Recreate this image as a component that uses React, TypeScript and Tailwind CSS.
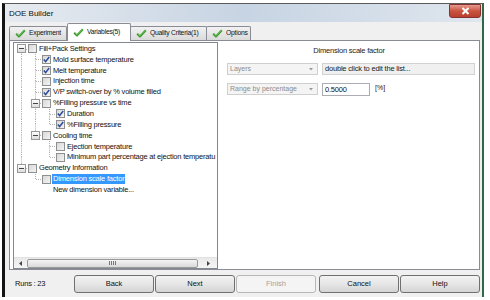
import React from "react";

type TreeNode = {
  label: string;
  level: number;
  kids?: boolean;
  cb: boolean | null; // null = no checkbox
  sel?: boolean;
  bare?: boolean; // placeholder row, no connector
};

const NODES: TreeNode[] = [
  { label: "Fill+Pack Settings", level: 0, kids: true, cb: false },
  { label: "Mold surface temperature", level: 1, cb: true },
  { label: "Melt temperature", level: 1, cb: true },
  { label: "Injection time", level: 1, cb: false },
  { label: "V/P switch-over by % volume filled", level: 1, cb: true },
  { label: "%Filling pressure vs time", level: 1, kids: true, cb: false },
  { label: "Duration", level: 2, cb: true },
  { label: "%Filling pressure", level: 2, cb: true },
  { label: "Cooling time", level: 1, kids: true, cb: false },
  { label: "Ejection temperature", level: 2, cb: false },
  { label: "Minimum part percentage at ejection temperatu", level: 2, cb: false },
  { label: "Geometry Information", level: 0, kids: true, cb: false },
  { label: "Dimension scale factor", level: 1, cb: false, sel: true },
  { label: "New dimension variable...", level: 1, cb: null, bare: true },
];

/// true when a later node sits at the same level under the same parent
function hasNext(i: number): boolean {
  const lv = NODES[i].level;
  for (let j = i + 1; j < NODES.length; j++) {
    if (NODES[j].bare) continue;
    if (NODES[j].level < lv) return false;
    if (NODES[j].level === lv) return true;
  }
  return false;
}

function ancestorAt(i: number, level: number): number {
  for (let j = i - 1; j >= 0; j--) if (NODES[j].level === level) return j;
  return -1;
}

const DOT = "#b0b0b0";

function Cell({
  up,
  down,
  across,
  expander,
}: {
  up?: boolean;
  down?: boolean;
  across?: boolean;
  expander?: boolean;
}) {
  return (
    <div className="grid w-[14px] h-full shrink-0">
      <svg width="14" height="100%" className="col-start-1 row-start-1 h-full">
        {up && <line x1="7.5" y1="0" x2="7.5" y2="50%" stroke={DOT} strokeDasharray="1 1" />}
        {down && <line x1="7.5" y1="50%" x2="7.5" y2="100%" stroke={DOT} strokeDasharray="1 1" />}
        {across && <line x1="8" y1="50%" x2="14" y2="50%" stroke={DOT} strokeDasharray="1 1" />}
      </svg>
      {expander && (
        <div className="col-start-1 row-start-1 self-center justify-self-center w-[9px] h-[9px] border border-[#999] bg-gradient-to-b from-white to-[#dcdcdc] flex items-center justify-center">
          <div className="w-[5px] h-px bg-[#444]" />
        </div>
      )}
    </div>
  );
}

function CheckBox({ on }: { on: boolean }) {
  return (
    <div className="w-[9px] h-[9px] shrink-0 border border-[#8e8f8f] bg-gradient-to-br from-[#d8d8d8] to-[#f4f4f4] flex items-center justify-center">
      {on && (
        <svg width="7" height="7" viewBox="0 0 7 7">
          <path d="M0.8 3.6 L2.6 5.6 L6.2 1" fill="none" stroke="#2c4a9a" strokeWidth="1.5" />
        </svg>
      )}
    </div>
  );
}

function TreeRow({ i }: { i: number }) {
  const n = NODES[i];
  const cells: React.ReactNode[] = [];
  for (let k = 0; k < n.level; k++) {
    const a = ancestorAt(i, k);
    const cont = a >= 0 && hasNext(a);
    cells.push(<Cell key={k} up={cont} down={cont} />);
  }
  if (n.bare) {
    cells.push(<Cell key="own" />);
  } else {
    cells.push(
      <Cell key="own" up={i !== 0} down={hasNext(i)} across expander={n.kids} />,
    );
  }
  return (
    <div className="flex items-center h-[10.85px]">
      {cells}
      {n.cb === null ? <div className="w-[9px] shrink-0" /> : <CheckBox on={n.cb} />}
      <span
        className={`ml-[1px] px-[1px] leading-[10px] whitespace-nowrap ${
          n.sel ? "bg-[#3399ff] text-white" : "text-[#111]"
        }`}
      >
        {n.label}
      </span>
    </div>
  );
}

function TabCheck() {
  return (
    <svg width="11" height="9" viewBox="0 0 12 10" className="shrink-0">
      <path d="M1.2 5.2 L4.3 8.3 L10.8 1.4" fill="none" stroke="#3f9b2f" strokeWidth="2.3" strokeLinejoin="round" />
      <path d="M1.6 4.9 L4.3 7.6 L10.4 1.3" fill="none" stroke="#7fd06a" strokeWidth="0.7" />
    </svg>
  );
}

function Tab({ label, width, active }: { label: string; width: string; active?: boolean }) {
  return (
    <div
      className={`${width} flex items-center gap-[3px] pl-[5px] border border-[#898c95] rounded-t-[2px] whitespace-nowrap overflow-hidden ${
        active
          ? "h-[18px] bg-white border-b-0 -mb-px relative z-10"
          : "h-[14px] bg-gradient-to-b from-[#f2f2f2] to-[#dadada] border-b-0 -ml-px"
      }`}
    >
      <TabCheck />
      <span className="text-[6.8px] tracking-[-0.25px] text-[#111]">{label}</span>
    </div>
  );
}

function Combo({ label, width }: { label: string; width: string }) {
  return (
    <div className={`${width} h-[12px] flex items-center border border-[#cfcfcf] bg-[#f4f4f4] pl-[2px]`}>
      <span className="flex-1 text-[7px] text-[#8c8c8c] whitespace-nowrap">{label}</span>
      <svg width="10" height="6" viewBox="0 0 10 6" className="mr-[1px]">
        <path d="M3 2 L7 2 L5 4.5 Z" fill="#9a9a9a" />
      </svg>
    </div>
  );
}

function Button({ label, disabled }: { label: string; disabled?: boolean }) {
  return (
    <div
      className={`w-[80px] h-[18px] rounded-[3px] border flex items-center justify-center text-[7.5px] ${
        disabled
          ? "border-[#b5b8bb] bg-[#f4f4f4] text-[#a3a3a3]"
          : "border-[#707070] bg-gradient-to-b from-[#f3f3f3] via-[#e6e6e6] to-[#d4d4d4] text-[#111]"
      }`}
    >
      {label}
    </div>
  );
}

function HScroll() {
  return (
    <div className="h-[11px] flex items-center bg-gradient-to-b from-[#e9e9e9] to-[#f5f5f5] border-t border-[#e2e2e2]">
      <div className="w-[13px] flex justify-center">
        <svg width="4" height="5" viewBox="0 0 4 5"><path d="M3 0 L0 2.5 L3 5 Z" fill="#444" /></svg>
      </div>
      <div className="w-[171px] h-[9px] rounded-[2px] border border-[#9a9a9a] bg-gradient-to-b from-[#f4f4f4] to-[#d9d9d9] flex items-center justify-center gap-[1px]">
        <div className="w-px h-[4px] bg-[#777]" />
        <div className="w-px h-[4px] bg-[#777]" />
        <div className="w-px h-[4px] bg-[#777]" />
        <div className="w-px h-[4px] bg-[#777]" />
      </div>
      <div className="flex-1 flex justify-center">
        <svg width="4" height="5" viewBox="0 0 4 5"><path d="M1 0 L4 2.5 L1 5 Z" fill="#444" /></svg>
      </div>
    </div>
  );
}

export default function App() {
  return (
    <div className="w-[490px] h-[300px] bg-white overflow-hidden pl-[2px] pt-[3px] font-['Liberation_Sans',Arial,sans-serif]">
      <div className="w-[482px] h-[294px] flex flex-col border-l-[3px] border-l-[#141414] border-t border-t-[#5a5a5a] border-r-2 border-r-[#2e6a48] bg-[#f0f0f0]">
        {/* Title bar */}
        <div className="h-[18px] flex items-start bg-gradient-to-r from-[#e7ebf0] via-[#c7d4e3] to-[#dfe6ee]">
          <span className="mt-[4px] ml-[4px] text-[8px] text-[#111]">DOE Builder</span>
          <div className="ml-auto mr-[1px] w-[32px] h-[14px] rounded-b-[3px] border border-[#8a2f2f] bg-gradient-to-b from-[#e39a8e] via-[#c9533f] to-[#b8402e] flex items-center justify-center">
            <svg width="9" height="8" viewBox="0 0 9 8">
              <path d="M1.5 1 L7.5 7 M7.5 1 L1.5 7" stroke="white" strokeWidth="2" />
            </svg>
          </div>
        </div>

        {/* Tabs */}
        <div className="h-[18px] flex items-end pl-[5px]">
          <Tab label="Experiment" width="w-[58px]" />
          <Tab label="Variables(5)" width="w-[64px]" active />
          <Tab label="Quality Criteria(1)" width="w-[77px]" />
          <Tab label="Options" width="w-[45px]" />
        </div>

        {/* Tab page */}
        <div className="ml-[4px] w-[471px] h-[230px] border border-[#898c95] bg-white flex">
          <div className="ml-[3px] mt-[1px] w-[205px] h-[227px] border border-[#828790] flex flex-col text-[7.5px] tracking-[-0.2px]">
            <div className="flex-1 pt-[0.5px]">
              {NODES.map((_, i) => (
                <TreeRow key={i} i={i} />
              ))}
            </div>
            <HScroll />
          </div>

          <div className="flex-1 pl-[9px] pt-[4px]">
            <div className="text-center text-[7.5px] tracking-[-0.2px] text-[#222] leading-[11px] pr-[8px]">
              Dimension scale factor
            </div>
            <div className="mt-[7px] flex gap-[4px]">
              <Combo label="Layers" width="w-[91px]" />
              <div className="w-[153px] h-[12px] border border-[#d2d2d2] bg-[#f0f0f0] flex items-center pl-[2px] text-[7.5px] tracking-[-0.2px] text-[#222] whitespace-nowrap">
                double click to edit the list...
              </div>
            </div>
            <div className="mt-[8px] flex items-start gap-[4px]">
              <Combo label="Range by percentage" width="w-[91px]" />
              <div className="w-[48px] h-[13px] border border-[#abadb3] bg-white flex items-center pl-[2px] text-[7.5px] tracking-[-0.2px] text-[#111]">
                0.5000
              </div>
              <span className="ml-[1px] text-[7px] text-[#222] leading-[9px]">[%]</span>
            </div>
          </div>
        </div>

        {/* Bottom bar */}
        <div className="flex-1 flex items-center pl-[10px]">
          <span className="w-[59px] text-[7.5px] tracking-[-0.2px] text-[#111]">Runs : 23</span>
          <div className="flex gap-[1px]">
            <Button label="Back" />
            <Button label="Next" />
            <Button label="Finish" disabled />
            <div className="w-[1px]" />
            <Button label="Cancel" />
            <Button label="Help" />
          </div>
        </div>
      </div>
    </div>
  );
}
